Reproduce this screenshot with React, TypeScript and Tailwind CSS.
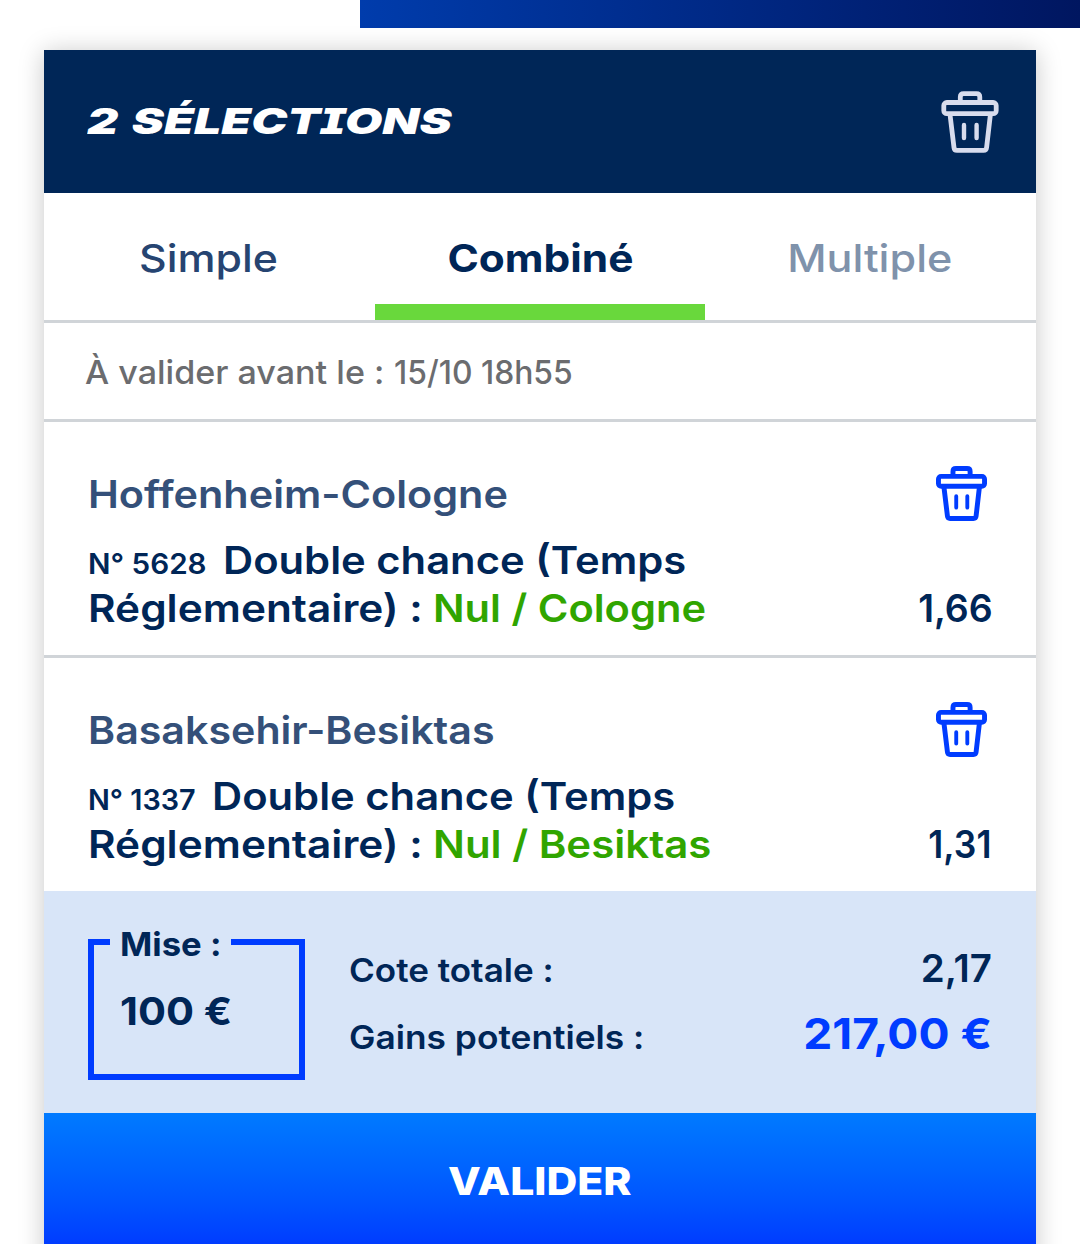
import React from "react";

function TrashIcon({ className, stroke }: { className: string; stroke: number }) {
  return (
    <svg viewBox="0 0 58 62" fill="none" stroke="currentColor" strokeWidth={stroke} strokeLinejoin="round" className={className}>
      <path d="M19.3 11V6Q19.3 2.6 22.7 2.6H35.4Q38.8 2.6 38.8 6V11" />
      <rect x="2.8" y="11.5" width="52.4" height="11.2" rx="3" />
      <path d="M9 23.5L13 56.6Q13.3 59.4 16 59.4H42.6Q45.3 59.4 45.6 56.6L49.4 23.5" />
      <path d="M23 34V47M35.6 34V47" strokeWidth="4.4" strokeLinecap="round" />
    </svg>
  );
}

interface Selection {
  match: string;
  matchClass: string;
  code: string;
  codeClass: string;
  codeBox: string;
  pick: string;
  pickClass: string;
  odds: string;
  oddsClass: string;
}

const selections: Selection[] = [
  {
    match: "Hoffenheim-Cologne",
    matchClass: "scale-x-[1.075]",
    code: "N° 5628",
    codeClass: "scale-x-[1.04]",
    codeBox: "w-[135px]",
    pick: "Nul / Cologne",
    pickClass: "scale-x-[1.081]",
    odds: "1,66",
    oddsClass: "scale-x-[0.972] -mr-px",
  },
  {
    match: "Basaksehir-Besiktas",
    matchClass: "scale-x-[1.069]",
    code: "N° 1337",
    codeClass: "scale-x-[1.01]",
    codeBox: "w-[124px]",
    pick: "Nul / Besiktas",
    pickClass: "scale-x-[1.091]",
    odds: "1,31",
    oddsClass: "scale-x-[0.922] mr-px",
  },
];

function SelectionRow({ item, last }: { item: Selection; last: boolean }) {
  return (
    <section
      className={
        "flex justify-between pl-11 pr-[44px] text-[38.5px] font-semibold leading-[48px] text-[#002657] " +
        (last ? "h-[233px]" : "h-[236px] border-b-[3px] border-[#d0d4d8]")
      }
    >
      <div className="pt-12 whitespace-nowrap">
        <h2 className={"w-fit origin-left font-semibold text-[#345079] " + item.matchClass}>{item.match}</h2>
        <div className="mt-[18px] flex h-12 items-baseline">
          <span className={"shrink-0 text-[28.5px] " + item.codeBox}>
            <span className={"inline-block origin-left " + item.codeClass}>{item.code}</span>
          </span>
          <span className="inline-block origin-left scale-x-[1.084]">Double chance (Temps</span>
        </div>
        <div className="flex h-12 items-baseline">
          <span className="w-[344.5px] shrink-0">
            <span className="inline-block origin-left scale-x-[1.1]">Réglementaire) :</span>
          </span>
          <span className={"inline-block origin-left text-[#30a500] " + item.pickClass}>{item.pick}</span>
        </div>
      </div>
      <div className="flex flex-col items-end justify-between pt-11 pb-[23px]">
        <button className="mr-[5px] text-[#003cff]" aria-label="Supprimer la sélection">
          <TrashIcon className="h-[55px] w-[51px]" stroke={5.6} />
        </button>
        <span className={"origin-right " + item.oddsClass}>{item.odds}</span>
      </div>
    </section>
  );
}

export default function App() {
  return (
    <main className="h-[1244px] w-[1080px] overflow-hidden bg-white font-[Inter,sans-serif]">
      <div className="ml-[360px] h-7 bg-linear-to-r from-[#003cac] to-[#001660]" />
      <article className="mx-11 mt-[22px] h-[1230px] bg-white shadow-[0_2px_24px_rgba(0,0,0,0.22)]">
        <header className="flex h-[143px] items-center justify-between bg-[#002657] pr-[37px] pl-[43px]">
          <h1 className="-mt-0.5 origin-left scale-x-[1.34] whitespace-nowrap text-[36px] font-black italic leading-none text-white [font-feature-settings:'cv08'] [word-spacing:3px]">
            2 SÉLECTIONS
          </h1>
          <button className="text-[#d8dced]" aria-label="Tout supprimer">
            <TrashIcon className="h-[62px] w-[58px]" stroke={4.8} />
          </button>
        </header>

        <nav className="grid h-[130px] grid-cols-3 border-b-[3px] border-[#d0d4d8] text-center text-[38.5px] leading-[48px]">
          <div className="pt-[41px] pr-px font-medium text-[#264471]">
            <span className="inline-block scale-x-[1.112]">Simple</span>
          </div>
          <div className="flex flex-col items-center justify-between pt-[41px] font-bold text-[#002657]">
            <span className="inline-block scale-x-[1.102]">Combiné</span>
            <div className="h-4 w-[330px] bg-[#69d83c]" />
          </div>
          <div className="pt-[41px] pr-px font-medium text-[#7f92ab]">
            <span className="inline-block scale-x-[1.12]">Multiple</span>
          </div>
        </nav>

        <div className="flex h-[99px] items-center border-b-[3px] border-[#d0d4d8] pt-0.5 pl-[41px]">
          <p className="flex whitespace-nowrap text-[33px] font-medium leading-10 text-[#6b6c6f]">
            <span className="w-[309px] origin-left scale-x-[1.033]">À valider avant le :</span>
            <span className="origin-left scale-x-[0.965]">15/10 18h55</span>
          </p>
        </div>

        {selections.map((item, i) => (
          <SelectionRow key={item.code} item={item} last={i === selections.length - 1} />
        ))}

        <section className="flex h-[222px] bg-[#d8e5f8] pt-12 pr-11 pl-11 text-[#002657]">
          <div className="relative h-[141px] w-[217px] border-[6px] border-[#003cff] pt-[42px] pl-[26px]">
            <div className="absolute -top-[21px] left-4 flex h-10 w-[121px] justify-start bg-[#d8e5f8] pl-[10px] text-[33px] font-bold leading-10">
              <span className="inline-block origin-left scale-x-[1.05] whitespace-nowrap">Mise :</span>
            </div>
            <span className="inline-block origin-left scale-x-[1.094] text-[38px] font-bold leading-12">100 €</span>
          </div>
          <div className="ml-[43.5px] flex grow flex-col font-semibold">
            <div className="flex h-[62px] items-center justify-between leading-12">
              <span className="origin-left scale-x-[1.062] text-[33px]">Cote totale :</span>
              <span className="-mt-1 origin-right text-[38.5px]">2,17</span>
            </div>
            <div className="mt-0.5 flex h-[62px] items-center justify-between leading-12">
              <span className="mt-1.5 origin-left scale-x-[1.07] text-[33px]">Gains potentiels :</span>
              <span className="-mt-0.5 origin-right scale-x-[1.072] text-[43px] font-bold text-[#003cff]">217,00 €</span>
            </div>
          </div>
        </section>

        <button className="flex h-[136px] w-full items-center justify-center bg-linear-to-b from-[#007aff] from-0% to-[#003cff] to-96% text-[38.5px] font-extrabold leading-12 text-white">
          <span className="inline-block scale-x-[1.108]">VALIDER</span>
        </button>
      </article>
    </main>
  );
}
